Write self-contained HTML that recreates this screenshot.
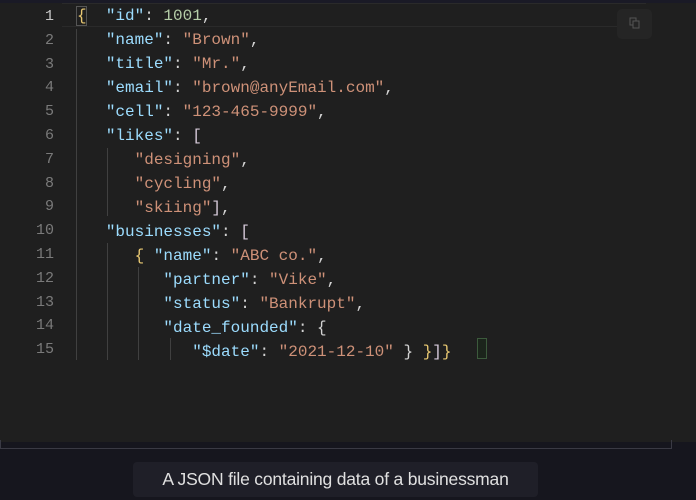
<!DOCTYPE html>
<html><head><meta charset="utf-8"><style>
*{margin:0;padding:0;box-sizing:border-box}
body{width:696px;height:500px;background:#16161e;overflow:hidden;position:relative;font-family:"Liberation Mono",monospace}
.top{position:absolute;left:0;top:0;width:696px;height:3px;background:#1a1a26}
.ed{position:absolute;left:0;top:3px;width:696px;height:439px;background:#1f1f1f}
.frame{position:absolute;left:0;top:440px;width:672px;height:9px;border:1px solid #3a3a44;border-top:none}
.cur{position:absolute;left:62px;top:3px;width:584px;height:24px;border-top:1px solid #2a2a2a;border-bottom:1px solid #2a2a2a}
.ln{position:absolute;left:0;width:54px;text-align:right;font-size:15px;color:#7a7a7a;line-height:24px}
.code{position:absolute;left:77px;font-size:16px;line-height:24px;white-space:pre;color:#d4d4d4}
.k{color:#9cdcfe}.s{color:#ce9178}.n{color:#b5cea8}.y{color:#e8c872}.p{color:#d4c8d8}.b{color:#d4d4d4}
.g{position:absolute;width:1px;background:#404040}
.copy{position:absolute;left:617px;top:9px;width:35px;height:30px;background:#252525;border-radius:5px}
.cap{position:absolute;left:133px;top:462px;width:405px;height:35px;background:#1f1f28;border-radius:4px;color:#e0e0e0;font-family:"Liberation Sans",sans-serif;font-size:17.5px;text-align:center;line-height:35px;letter-spacing:-0.2px}
.cursor{position:absolute;left:477px;top:338px;width:10px;height:21px;border:1px solid #3c5a3c;background:#1b241b}
</style></head><body>
<div class="top"></div>
<div class="ed"></div>
<div class="frame"></div>
<div class="cur"></div>
<div style="position:absolute;left:76px;top:6px;width:11px;height:20px;border:1px solid #555"></div>
<div class="copy"><svg width="35" height="30" viewBox="0 0 35 30"><rect x="13" y="9" width="6" height="7" fill="none" stroke="#555" stroke-width="1"/><rect x="16" y="12" width="6" height="7" fill="#252525" stroke="#555" stroke-width="1"/></svg></div>
<div class="g" style="left:76px;top:29px;height:331px"></div>
<div class="g" style="left:107px;top:148px;height:68px"></div>
<div class="g" style="left:107px;top:243px;height:117px"></div>
<div class="g" style="left:138px;top:267px;height:93px"></div>
<div class="g" style="left:170px;top:338px;height:22px"></div>
<div class="ln" style="top:5px;color:#c6c6c6">1</div>
<div class="ln" style="top:29px">2</div>
<div class="ln" style="top:53px">3</div>
<div class="ln" style="top:76px">4</div>
<div class="ln" style="top:100px">5</div>
<div class="ln" style="top:124px">6</div>
<div class="ln" style="top:148px">7</div>
<div class="ln" style="top:172px">8</div>
<div class="ln" style="top:195px">9</div>
<div class="ln" style="top:219px">10</div>
<div class="ln" style="top:243px">11</div>
<div class="ln" style="top:267px">12</div>
<div class="ln" style="top:291px">13</div>
<div class="ln" style="top:314px">14</div>
<div class="ln" style="top:338px">15</div>
<div class="code" style="top:4px"><span class="y">{</span>  <span class="k">"id"</span>: <span class="n">1001</span>,
   <span class="k">"name"</span>: <span class="s">"Brown"</span>,
   <span class="k">"title"</span>: <span class="s">"Mr."</span>,
   <span class="k">"email"</span>: <span class="s">"brown@anyEmail.com"</span>,
   <span class="k">"cell"</span>: <span class="s">"123-465-9999"</span>,
   <span class="k">"likes"</span>: <span class="p">[</span>
      <span class="s">"designing"</span>,
      <span class="s">"cycling"</span>,
      <span class="s">"skiing"</span><span class="p">]</span>,
   <span class="k">"businesses"</span>: <span class="p">[</span>
      <span class="y">{</span> <span class="k">"name"</span>: <span class="s">"ABC co."</span>,
         <span class="k">"partner"</span>: <span class="s">"Vike"</span>,
         <span class="k">"status"</span>: <span class="s">"Bankrupt"</span>,
         <span class="k">"date_founded"</span>: <span class="b">{</span>
            <span class="k">"$date"</span>: <span class="s">"2021-12-10"</span> <span class="b">}</span> <span class="y">}</span><span class="p">]</span><span class="y">}</span></div>
<div class="cursor"></div>
<div class="cap">A JSON file containing data of a businessman</div>
</body></html>
